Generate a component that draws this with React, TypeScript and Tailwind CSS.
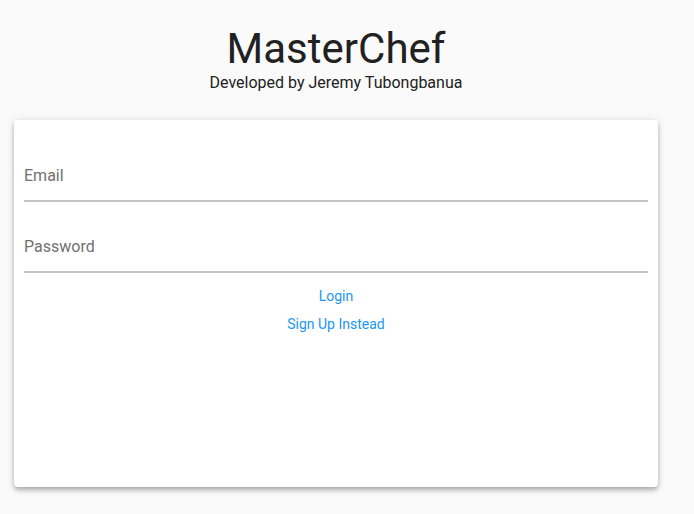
import React from "react";

export default function App() {
  return (
    <div className="min-h-screen w-full bg-[#fafafa]" style={{ fontFamily: "Roboto, 'Noto Sans', sans-serif" }}>
      <div className="w-[672px] flex flex-col items-center">
        <h1 className="pt-[26px] text-[42px] leading-[46px] font-normal text-[#212121]">MasterChef</h1>
        <p className="mt-[1px] text-[16px] leading-[19px] text-[#212121]">Developed by Jeremy Tubongbanua</p>
        <div className="mt-[28px] w-[644px] h-[367px] bg-white rounded-[4px] px-[10px] pt-[10px] shadow-[0_2px_4px_-1px_rgba(0,0,0,0.2),0_4px_5px_0_rgba(0,0,0,0.14),0_1px_10px_0_rgba(0,0,0,0.12)]">
          <div className="pt-[36px] pb-[15px] border-b-2 border-[#c4c4c4] text-[16px] leading-[19px] text-[#707070]">Email</div>
          <div className="pt-[35px] pb-[15px] border-b-2 border-[#c4c4c4] text-[16px] leading-[19px] text-[#707070]">Password</div>
          <div className="mt-[9px] flex flex-col items-center">
            <button className="text-[14px] leading-[28px] text-[#2196f3]">Login</button>
            <button className="text-[14px] leading-[28px] text-[#2196f3]">Sign Up Instead</button>
          </div>
        </div>
      </div>
    </div>
  );
}
